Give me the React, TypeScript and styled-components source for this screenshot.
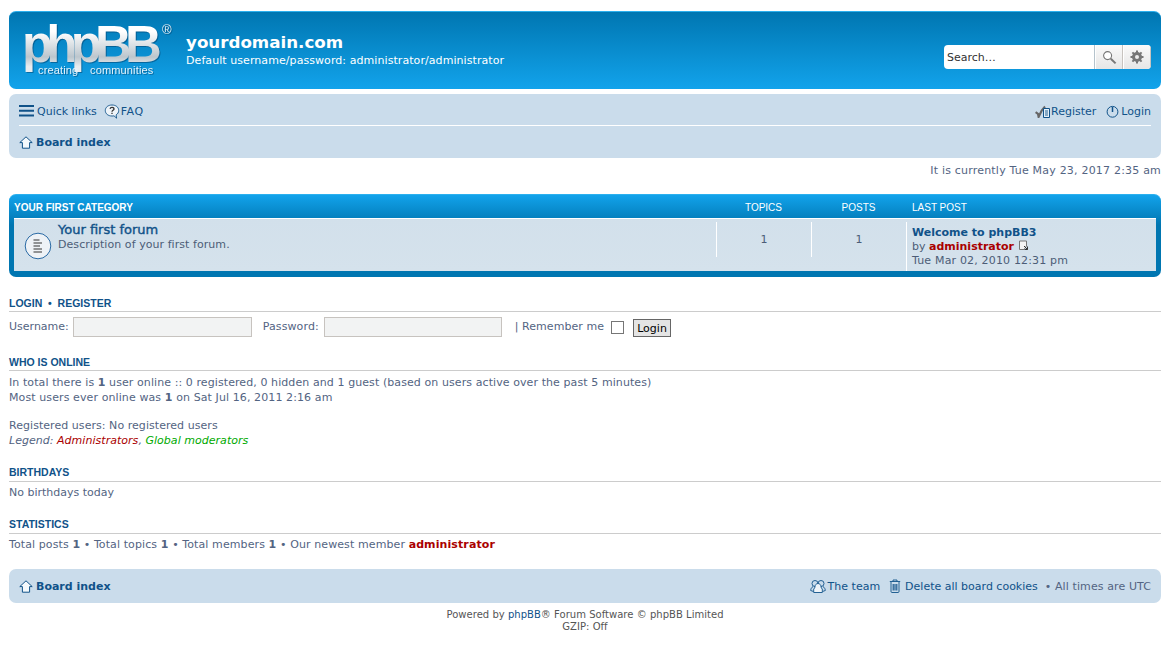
import React from "react";
import styled, { createGlobalStyle } from "styled-components";

const Global = createGlobalStyle`
  html, body { margin: 0; padding: 0; background: #fff; }
  body { font-family: "DejaVu Sans", Verdana, sans-serif; font-size: 11px; color: #536482; }
  * { box-sizing: border-box; }
`;
const Wrap = styled.div`
  width: 1170px;
  padding: 11px 9px 0;
  display: flex;
  flex-direction: column;
`;
const Headerbar = styled.header`
  height: 78px;
  border-radius: 7px;
  background: linear-gradient(#0076b1, #12a3eb);
  border-top: 1px solid #2cb0ee;
  padding: 0 10px 0 13px;
  display: flex;
  align-items: flex-start;
  color: #fff;
`;
const Logo = styled.div`
  position: relative;
  width: 147px;
  height: 64px;
  margin-top: 6px;
  margin-right: 17px;
  flex: none;
  filter: drop-shadow(1px 1px 0 rgba(0, 50, 90, 0.45));
`;
const LogoMark = styled.span`
  display: block;
  font: 700 51px/54px "Liberation Sans", Arial, sans-serif;
  letter-spacing: -6.800px;
  background: linear-gradient(#ffffff 25%, #bcc6cd 72%, #e8ecef 90%);
  -webkit-background-clip: text;
  background-clip: text;
  color: transparent;
`;
const LogoTag = styled.span<{ $x: number }>`
  position: absolute;
  font: 400 11px/12px "Liberation Sans", Arial, sans-serif;
  letter-spacing: 0.15px;
  color: #e6f2fa;
  top: 46px;
  left: ${(p) => p.$x}px;
`;
const LogoReg = styled.span`
  position: absolute;
  left: 140px;
  top: 6px;
  font: 400 13px/12px "Liberation Sans", Arial, sans-serif;
  color: #e6eef4;
`;
const SiteInfo = styled.div`
  margin-top: 20px;
  flex: 1;
`;
const SiteTitle = styled.h1`
  margin: 0;
  font: 700 16.7px/21px "DejaVu Sans", Verdana, sans-serif;
  color: #fff;
`;
const SiteDesc = styled.p`
  margin: 1px 0 0;
  font-size: 11px;
  line-height: 13px;
  letter-spacing: 0.07px;
  color: #fff;
`;
const SearchBox = styled.div`
  margin-top: 33px;
  display: flex;
  height: 24px;
  width: 207px;
  border-radius: 4px;
  overflow: hidden;
  background: #fff;
`;
const SearchInput = styled.div`
  width: 151px;
  font-size: 11px;
  line-height: 25px;
  padding-left: 3px;
  color: #333;
  border-right: 1px solid #b5c3cc;
`;
const SearchButton = styled.div`
  flex: 1;
  display: flex;
  align-items: center;
  justify-content: center;
  background: linear-gradient(#fafafa, #e6e6e6);
  border-left: 1px solid #fff;
  border-right: 1px solid #c7c3bf;
`;
const Navbar = styled.nav`
  margin-top: 5px;
  background: #cadceb;
  border-radius: 7px;
  padding: 0 10px;
`;
const NavRow = styled.div<{ $h: number; $line?: boolean }>`
  display: flex;
  align-items: center;
  justify-content: space-between;
  height: ${(p) => p.$h}px;
  padding-top: ${(p) => (p.$line ? 3 : 0)}px;
  border-bottom: ${(p) => (p.$line ? "1px solid #fff" : "none")};
`;
const Group = styled.div<{ $gap?: number }>`
  display: flex;
  align-items: center;
  gap: ${(p) => p.$gap ?? 8}px;
`;
const Item = styled.a<{ $gap?: number; $ls?: number }>`
  display: flex;
  align-items: center;
  gap: ${(p) => p.$gap ?? 2}px;
  color: #105289;
  font-size: 11px;
  letter-spacing: ${(p) => p.$ls ?? 0}px;
  white-space: nowrap;
`;
const Crumb = styled(Item)`
  font-weight: 700;
  gap: 3px;
`;
const TimeLine = styled.p`
  margin: 6px 0 0;
  height: 24px;
  line-height: 13px;
  letter-spacing: 0.2px;
  text-align: right;
  color: #536482;
`;
const Forabg = styled.section`
  height: 83px;
  margin-top: 6px;
  border-radius: 7px;
  border-top: 1px solid #2cb0ee;
  background: linear-gradient(#12a3eb, #0076b1 30px, #0076b1);
  padding: 0 5px;
  display: flex;
  flex-direction: column;
`;
const ForumHead = styled.div`
  height: 24px;
  display: grid;
  grid-template-columns: 702px 95px 95px 1fr;
  align-items: center;
  font: 400 10px/12px "Liberation Sans", Arial, sans-serif;
  color: #fff;
  border-bottom: 1px solid #fff;
  padding-top: 2px;
`;
const HeadTitle = styled.span`
  font-weight: 700;
`;
const HeadNum = styled.span`
  text-align: center;
`;
const HeadLast = styled.span`
  padding-left: 6px;
`;
const ForumRow = styled.div`
  height: 52px;
  display: grid;
  grid-template-columns: 702px 95px 95px 1fr;
  background: linear-gradient(#d2e0eb, #d5e2ec);
`;
const ForumMain = styled.div`
  display: flex;
  align-items: flex-start;
  padding-left: 10px;
`;
const ForumIcon = styled.div`
  margin-top: 13px;
  margin-right: 6px;
  flex: none;
`;
const ForumTitle = styled.a`
  display: block;
  margin-top: 4px;
  color: #105289;
  font-size: 13px;
  line-height: 14px;
  -webkit-text-stroke: 0.4px #105289;
`;
const ForumDesc = styled.p`
  margin: 1px 0 0;
  font-size: 11px;
  line-height: 14px;
  letter-spacing: 0.06px;
  color: #4c5d77;
`;
const NumCell = styled.div`
  margin-top: 3px;
  height: 35px;
  border-left: 1px solid #fff;
  text-align: center;
  font-size: 11px;
  line-height: 35px;
  color: #4c5d77;
`;
const LastCell = styled.div`
  margin-top: 3px;
  border-left: 1px solid #fff;
  padding: 4px 0 0 5px;
  font-size: 11px;
  line-height: 14px;
  color: #4c5d77;
`;
const LastTitle = styled.a`
  display: block;
  color: #105289;
  font-weight: 700;
`;
const LastDate = styled.span`
  letter-spacing: 0.17px;
`;
const AdminName = styled.b`
  color: #aa0000;
`;
const Section = styled.section<{ $top: number }>`
  margin-top: ${(p) => p.$top}px;
`;
const SectionHead = styled.h3<{ $h?: number }>`
  margin: 0;
  height: ${(p) => p.$h ?? 16}px;
  font: 700 10.5px/14px "Liberation Sans", Arial, sans-serif;
  color: #105289;
  border-bottom: 1px solid #ccc;
`;
const Para = styled.p<{ $top?: number; $ls?: number }>`
  margin: ${(p) => p.$top ?? 0}px 0 0;
  font-size: 11px;
  line-height: 15px;
  letter-spacing: ${(p) => p.$ls ?? 0}px;
  color: #536482;
`;
const LoginForm = styled.div`
  display: flex;
  align-items: center;
  margin-top: 4px;
  height: 21px;
`;
const FieldLabel = styled.span<{ $ml?: number; $mr: number; $ls?: number }>`
  color: #536482;
  letter-spacing: ${(p) => p.$ls ?? 0}px;
  margin-left: ${(p) => p.$ml ?? 0}px;
  margin-right: ${(p) => p.$mr}px;
`;
const FieldBox = styled.div<{ $w: number }>`
  height: 20px;
  background: #f2f3f3;
  border: 1px solid #c7c3bf;
  width: ${(p) => p.$w}px;
`;
const Check = styled.div`
  width: 13px;
  height: 13px;
  border: 1px solid #767676;
  background: #fff;
  margin: 2px 9px 0 7px;
`;
const LoginBtn = styled.div`
  width: 38px;
  height: 18px;
  border: 1px solid #666;
  background: #e4e4e4;
  color: #000;
  font-size: 11px;
  line-height: 18px;
  text-align: center;
  margin-top: 2px;
`;
const Legend = styled.em`
  font-style: italic;
`;
const Colored = styled.span<{ $c: string }>`
  color: ${(p) => p.$c};
`;
const FootBar = styled.div`
  margin-top: 17px;
  height: 34px;
  background: #cadceb;
  border-radius: 7px;
  padding: 0 10px;
  display: flex;
  align-items: center;
  justify-content: space-between;
`;
const FootNote = styled.span`
  letter-spacing: 0.1px;
  margin-left: -2px;
`;
const Copyright = styled.div`
  margin-top: 6px;
  text-align: center;
  font-size: 10px;
  line-height: 12px;
  letter-spacing: 0.03px;
  color: #555;
`;
const CopyLink = styled.a`
  color: #105289;
`;

const navIcon = "#105289";
const Bars = () => (
  <svg width="15" height="12" viewBox="0 0 15 12"><path d="M0 1h15M0 5.800h15M0 10.600h15" stroke={navIcon} strokeWidth="2" /></svg>
);
const Faq = () => (
  <svg width="16" height="15" viewBox="0 0 16 15" fill="none">
    <path d="M8 1C4.200 1 1.300 3.200 1.300 6.500S4.200 12 8 12c.8 0 1.400 0 2-.2l2.600 2.400-.5-3.300c1.700-1 2.600-2.600 2.600-4.400C14.700 3.200 11.800 1 8 1z" fill="#eef4f9" stroke={navIcon} strokeWidth=".9" />
    <path d="M6 4.800c.3-1 1.100-1.400 2-1.400 1.100 0 2 .6 2 1.600 0 1.300-2 1.400-2 2.800M8 8.700v1.200" stroke="#333" strokeWidth="1.300" />
  </svg>
);
const Home = () => (
  <svg width="14" height="13" viewBox="0 0 14 13" fill="none"><path d="M7 .8L.8 6.600h2.600v5.600h7.200V6.600h2.600z" fill="#f4f9fc" stroke={navIcon} strokeWidth="1" strokeLinejoin="round" /></svg>
);
const Reg = () => (
  <svg width="15" height="14" viewBox="0 0 15 14" fill="none">
    <path d="M.6 8.200l2.400 1.600.6 3C5 9 6.800 5.500 10 2.500" stroke="#666" strokeWidth="2.200" />
    <path d="M8.500 4.500h6v9h-6z" fill="#e6f0f8" stroke={navIcon} />
    <path d="M10 7h3M10 9h3M10 11h3" stroke={navIcon} strokeWidth=".9" />
  </svg>
);
const Power = () => (
  <svg width="13" height="13" viewBox="0 0 13 13" fill="none">
    <circle cx="6.500" cy="6.800" r="5.400" stroke={navIcon} />
    <path d="M6.500 2v5" stroke={navIcon} strokeWidth="1.500" />
  </svg>
);
const Glass = () => (
  <svg width="15" height="15" viewBox="0 0 15 15" fill="none">
    <circle cx="5.600" cy="5.600" r="4" fill="#fff" stroke="#777" strokeWidth="1.100" />
    <path d="M8.800 8.800L13.600 13.400" stroke="#777" strokeWidth="2" />
  </svg>
);
const Gear = () => (
  <svg width="14" height="14" viewBox="0 0 14 14">
    <circle cx="7" cy="7" r="3.600" fill="none" stroke="#777" strokeWidth="2.800" />
    <path d="M7 .5v13M.5 7h13M2.400 2.400l9.200 9.200M11.600 2.400l-9.200 9.200" stroke="#777" strokeWidth="2" />
    <circle cx="7" cy="7" r="2" fill="#eee" />
  </svg>
);
const ForumBadge = () => (
  <svg width="28" height="28" viewBox="0 0 28 28" fill="none">
    <circle cx="14" cy="14" r="12.800" fill="#eef2f6" stroke="#2a6aa5" strokeWidth="1" />
    <path d="M9.500 8h6M9.500 11h8.500M9.500 14h6.500M9.500 17h8.500M9.500 20h8.500" stroke="#333" strokeWidth="1.200" />
  </svg>
);
const PostIcon = () => (
  <svg width="11" height="11" viewBox="0 0 11 11" fill="none" style={{ verticalAlign: -1 }}>
    <path d="M1.500 1h7v5l-2.500 3.500h-4.500z" fill="#f4f4f4" stroke="#777" />
    <path d="M6 6l3.500 3.500M9.500 6.500v3h-3" stroke="#333" />
  </svg>
);
const Team = () => (
  <svg width="16" height="15" viewBox="0 0 16 15" fill="none" stroke={navIcon} strokeWidth=".9">
    <circle cx="5" cy="4.500" r="3" />
    <circle cx="11" cy="4.500" r="3" />
    <path d="M3 7.500C1.500 8.500.7 10 .7 11.500l2.800 1M13 7.500c1.500 1 2.300 2.500 2.300 4l-2.800 1" />
    <path d="M8 4.500c-1.800 0-3 1.600-3 3.300 0 1-.5 1.500-1.300 2.200v3.500h8.600V10c-.8-.7-1.300-1.200-1.300-2.200 0-1.700-1.200-3.300-3-3.300z" fill="#eef4f9" />
  </svg>
);
const Trash = () => (
  <svg width="12" height="14" viewBox="0 0 12 14" fill="none" stroke={navIcon} strokeWidth=".9">
    <path d="M.8 2.500h10.400M4 2.500V1h4v1.500M2 3v9.500c0 .6.400 1 1 1h6c.6 0 1-.4 1-1V3" />
    <path d="M4.200 5v6.500M6 5v6.500M7.800 5v6.500" strokeWidth="1.100" />
  </svg>
);

export default function App() {
  return (
    <Wrap>
      <Global />
      <Headerbar>
        <Logo>
          <LogoMark>phpBB</LogoMark>
          <LogoReg>®</LogoReg>
          <LogoTag $x={16}>creating</LogoTag>
          <LogoTag $x={68}>communities</LogoTag>
        </Logo>
        <SiteInfo>
          <SiteTitle>yourdomain.com</SiteTitle>
          <SiteDesc>Default username/password: administrator/administrator</SiteDesc>
        </SiteInfo>
        <SearchBox>
          <SearchInput>Search…</SearchInput>
          <SearchButton><Glass /></SearchButton>
          <SearchButton><Gear /></SearchButton>
        </SearchBox>
      </Headerbar>
      <Navbar>
        <NavRow $h={32} $line>
          <Group $gap={7}>
            <Item $gap={3}><Bars /> Quick links</Item>
            <Item $gap={1} $ls={0.5}><Faq /> FAQ</Item>
          </Group>
          <Group $gap={10}>
            <Item $gap={1}><Reg /> Register</Item>
            <Item><Power /> Login</Item>
          </Group>
        </NavRow>
        <NavRow $h={32}>
          <Crumb><Home /> Board index</Crumb>
        </NavRow>
      </Navbar>
      <TimeLine>It is currently Tue May 23, 2017 2:35 am</TimeLine>
      <Forabg>
        <ForumHead>
          <HeadTitle>YOUR FIRST CATEGORY</HeadTitle>
          <HeadNum>TOPICS</HeadNum>
          <HeadNum>POSTS</HeadNum>
          <HeadLast>LAST POST</HeadLast>
        </ForumHead>
        <ForumRow>
          <ForumMain>
            <ForumIcon><ForumBadge /></ForumIcon>
            <div>
              <ForumTitle>Your first forum</ForumTitle>
              <ForumDesc>Description of your first forum.</ForumDesc>
            </div>
          </ForumMain>
          <NumCell>1</NumCell>
          <NumCell>1</NumCell>
          <LastCell>
            <LastTitle>Welcome to phpBB3</LastTitle>
            by <AdminName>administrator</AdminName> <PostIcon /><br />
            <LastDate>Tue Mar 02, 2010 12:31 pm</LastDate>
          </LastCell>
        </ForumRow>
      </Forabg>
      <Section $top={19}>
        <SectionHead>LOGIN &nbsp;•&nbsp; REGISTER</SectionHead>
        <LoginForm>
          <FieldLabel $mr={4}>Username:</FieldLabel>
          <FieldBox $w={179} />
          <FieldLabel $ml={11} $mr={5} $ls={0.1}>Password:</FieldLabel>
          <FieldBox $w={178} />
          <FieldLabel $ml={13} $mr={0} $ls={0.05}>| Remember me</FieldLabel>
          <Check />
          <LoginBtn>Login</LoginBtn>
        </LoginForm>
      </Section>
      <Section $top={18}>
        <SectionHead>WHO IS ONLINE</SectionHead>
        <Para $top={4} $ls={0.085}>In total there is <b>1</b> user online :: 0 registered, 0 hidden and 1 guest (based on users active over the past 5 minutes)</Para>
        <Para $ls={0.1}>Most users ever online was <b>1</b> on Sat Jul 16, 2011 2:16 am</Para>
        <Para $top={13} $ls={0.05}>Registered users: No registered users</Para>
        <Para $ls={0.03}><Legend>Legend: <Colored $c="#aa0000">Administrators</Colored>, <Colored $c="#00aa00">Global moderators</Colored></Legend></Para>
      </Section>
      <Section $top={17}>
        <SectionHead $h={17}>BIRTHDAYS</SectionHead>
        <Para $top={3}>No birthdays today</Para>
      </Section>
      <Section $top={17}>
        <SectionHead $h={17}>STATISTICS</SectionHead>
        <Para $top={3} $ls={0.1}>Total posts <b>1</b> • Total topics <b>1</b> • Total members <b>1</b> • Our newest member <AdminName>administrator</AdminName></Para>
      </Section>
      <FootBar>
        <Crumb><Home /> Board index</Crumb>
        <Group $gap={9}>
          <Item><Team /> The team</Item>
          <Item $gap={4}><Trash /> Delete all board cookies</Item>
          <FootNote>• All times are UTC</FootNote>
        </Group>
      </FootBar>
      <Copyright>
        Powered by <CopyLink>phpBB</CopyLink>® Forum Software © phpBB Limited<br />GZIP: Off
      </Copyright>
    </Wrap>
  );
}
